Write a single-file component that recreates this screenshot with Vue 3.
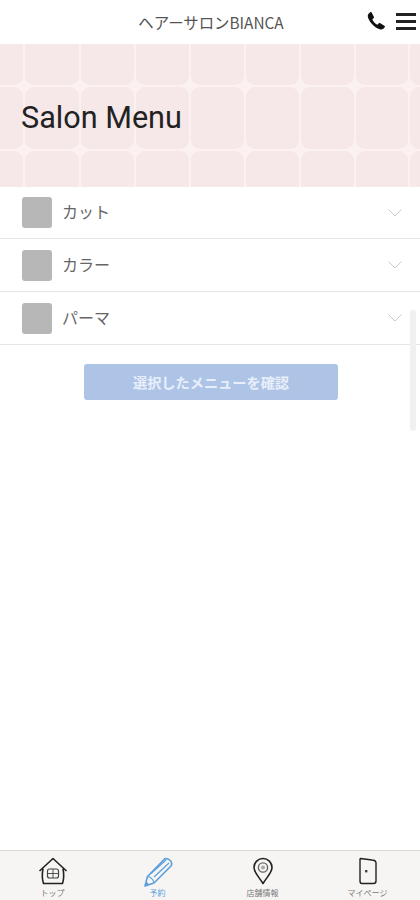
<template>
  <div class="page">
    <header class="top-bar">
      <h1 class="shop-name">ヘアーサロンBIANCA</h1>
      <div class="top-icons">
        <svg class="phone" viewBox="0 0 24 24" width="20" height="20">
          <path d="M6.6 1.6 L9.4 6.8 C9.8 7.6 9.6 8.3 9 8.8 L7.6 10 C8.6 12.6 11 15.4 13.6 16.6 L15.2 15 C15.8 14.4 16.5 14.3 17.2 14.7 L22 17.6 C22.8 18.1 22.9 18.9 22.4 19.6 C21 21.6 19.2 22.6 17.4 22.2 C10.6 20.8 3.6 13.2 2.2 7 C1.8 5 3 3 5 1.6 C5.6 1.2 6.2 1.1 6.6 1.6 Z" fill="#111" />
        </svg>
        <div class="burger">
          <span></span>
          <span></span>
          <span></span>
        </div>
      </div>
    </header>

    <section class="banner">
      <svg class="tiles" width="420" height="143" viewBox="0 0 420 143">
        <rect width="420" height="143" fill="#fbf1f0" />
        <template v-for="row in tileRows" :key="row.y">
          <rect
            v-for="col in tileCols"
            :key="col.x"
            :x="col.x"
            :y="row.y"
            :width="col.w"
            :height="row.h"
            rx="9"
            fill="#f6e8e9"
          />
        </template>
      </svg>
      <h2 class="banner-title">Salon Menu</h2>
    </section>

    <main class="content">
      <ul class="menu-list">
        <li class="menu-row" v-for="item in menus" :key="item">
          <span class="thumb"></span>
          <span class="menu-label">{{ item }}</span>
          <svg class="chevron" viewBox="0 0 14 8" width="14" height="8">
            <path d="M0.5 0.5 L7 7 L13.5 0.5" fill="none" stroke="#c9c9c9" stroke-width="1" />
          </svg>
        </li>
      </ul>
      <button class="confirm-btn">選択したメニューを確認</button>
      <div class="scroll-thumb"></div>
    </main>

    <nav class="tab-bar">
      <div class="tab">
        <svg viewBox="0 0 30 28" width="30" height="28">
          <path d="M1.5 14 L15 1.5 L28.5 14 M5 11.5 C4 17 4 22 5.5 26.5 L24.5 26.5 C26 22 26 17 25 11.5" fill="none" stroke="#222" stroke-width="1.6" stroke-linejoin="round" />
          <rect x="9.5" y="12" width="11" height="9" rx="2" fill="none" stroke="#444" stroke-width="1.2" />
          <path d="M9.5 16.5 H20.5 M15 12 V21" stroke="#444" stroke-width="0.9" />
        </svg>
        <span>トップ</span>
      </div>
      <div class="tab active">
        <svg viewBox="0 0 30 30" width="30" height="30">
          <path d="M21.5 2 C23.5 1 26.5 2 28 4.5 C29 6.5 28.8 8 28 9 L11 26 L2 29 L4.5 19.5 Z" fill="none" stroke="#5b9fdc" stroke-width="1.6" stroke-linejoin="round" />
          <path d="M4.5 19.5 C7 19.5 10.5 22.5 11 26 M8 16.5 L23 3 M11 20 L26 6" fill="none" stroke="#5b9fdc" stroke-width="1.2" />
          <path d="M2 29 L3.2 24.6 L6.4 27.6 Z" fill="#5b9fdc" />
        </svg>
        <span>予約</span>
      </div>
      <div class="tab">
        <svg viewBox="0 0 22 28" width="22" height="28">
          <path d="M11 26.5 C7 20 2 15.5 2 10.5 C2 5.5 6 1.5 11 1.5 C16 1.5 20 5.5 20 10.5 C20 15.5 15 20 11 26.5 Z" fill="none" stroke="#222" stroke-width="1.6" stroke-linejoin="round" />
          <circle cx="11" cy="10.5" r="4.6" fill="none" stroke="#666" stroke-width="1.4" />
          <circle cx="11" cy="10.5" r="2" fill="#aaa" />
        </svg>
        <span>店舗情報</span>
      </div>
      <div class="tab">
        <svg viewBox="0 0 20 28" width="20" height="28">
          <path d="M2.5 1.5 L14 3 C17 3.2 18 4 18 6 L18 24 C18 25.5 17 26.5 15.5 26.5 L4 26.5 C2.8 26.5 2 25.5 2 24 L2 2 Z" fill="none" stroke="#222" stroke-width="1.4" stroke-linejoin="round" />
          <rect x="7" y="13" width="2.4" height="2.4" fill="#444" />
        </svg>
        <span>マイページ</span>
      </div>
    </nav>
  </div>
</template>

<script setup>
const menus = ['カット', 'カラー', 'パーマ']

// タイルの位置 (線の位置が縦横で等間隔ではない)
const lineX = [-31, 24, 80, 135, 190, 245, 300, 355, 409, 465]
const tileCols = lineX.slice(0, -1).map((x, i) => ({ x: x + 1, w: lineX[i + 1] - x - 2 }))
const tileRows = [
  { y: -20, h: 61 },
  { y: 43, h: 62 },
  { y: 107, h: 50 },
]
</script>

<style>
html,
body {
  margin: 0;
  background: #fff;
}
</style>

<style scoped>
.page {
  width: 420px;
  height: 900px;
  display: flex;
  flex-direction: column;
  overflow: hidden;
  font-family: "Noto Sans CJK JP", "Noto Sans", sans-serif;
  background: #fff;
}

.top-bar {
  height: 44px;
  flex: none;
  display: flex;
  align-items: center;
  justify-content: center;
  position: relative;
}

.shop-name {
  margin: 0 0 1px 2px;
  font-size: 15.4px;
  font-weight: 400;
  color: #555;
}

.top-icons {
  position: absolute;
  right: 4px;
  top: 11px;
  display: flex;
  align-items: center;
  gap: 10px;
}

.burger {
  width: 20px;
  display: flex;
  flex-direction: column;
  gap: 4px;
}

.burger span {
  display: block;
  height: 3px;
  background: #222;
}

.banner {
  height: 143px;
  flex: none;
  position: relative;
  display: flex;
  align-items: center;
  padding-left: 21px;
}

.tiles {
  position: absolute;
  left: 0;
  top: 0;
}

.banner-title {
  position: relative;
  margin: 3px 0 0;
  font-family: Roboto, sans-serif;
  font-size: 30.6px;
  font-weight: 400;
  color: #222;
}

.content {
  flex: 1;
  position: relative;
  display: flex;
  flex-direction: column;
  align-items: center;
}

.menu-list {
  width: 100%;
  margin: 0;
  padding: 0;
  list-style: none;
}

.menu-row {
  height: 53px;
  box-sizing: border-box;
  padding: 0 18px 0 22px;
  border-bottom: 1px solid #e6e6e6;
  display: flex;
  align-items: center;
}

.menu-row:first-child {
  height: 52px;
}

.thumb {
  width: 30px;
  height: 31px;
  border-radius: 3px;
  background: #b7b7b7;
}

.menu-label {
  flex: 1;
  margin-left: 10px;
  margin-bottom: 3px;
  font-size: 16px;
  color: #666;
}

.confirm-btn {
  width: 254px;
  height: 36px;
  margin-top: 19px;
  margin-left: 2px;
  border: none;
  border-radius: 3px;
  background: #adc4e6;
  color: #e9effa;
  font-family: inherit;
  font-size: 14.2px;
  font-weight: 700;
}

.scroll-thumb {
  position: absolute;
  left: 410px;
  top: 123px;
  width: 6px;
  height: 121px;
  border-radius: 3px;
  background: #f0f0f0;
}

.tab-bar {
  height: 50px;
  flex: none;
  box-sizing: border-box;
  border-top: 1px solid #d9d9d9;
  background: #f6f5f4;
  display: grid;
  grid-template-columns: repeat(4, 105px);
}

.tab {
  display: flex;
  flex-direction: column;
  align-items: center;
  padding-top: 6px;
  position: relative;
}

.tab svg {
  display: block;
}

.tab span {
  position: absolute;
  top: 37px;
  font-size: 8px;
  line-height: 10px;
  color: #777;
}

.tab.active span {
  color: #5b9fdc;
}
</style>
